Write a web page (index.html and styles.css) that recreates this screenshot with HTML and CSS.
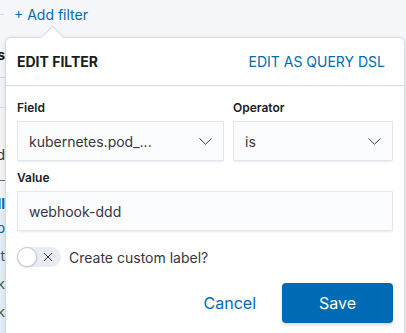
FILE: index.html
```html
<!DOCTYPE html>
<html lang="en">
<head>
  <meta charset="UTF-8" />
  <meta name="viewport" content="width=device-width, initial-scale=1.0"/>
  <title>Edit filter</title>
  <link rel="stylesheet" href="styles.css">
</head>
<body>
  <div class="topbar">
    <span class="topbar-rule"></span>
    <a class="add-filter">+ Add filter</a>
  </div>

  <div class="sidebar">
    <div class="side-title">Fields</div>
    <div class="side-line"></div>
    <div class="side-text">Selected</div>
    <div class="side-dark"></div>
    <div class="side-link">All</div>
    <div class="side-list">
      <div class="side-item blue">timestamp</div>
      <div class="side-item">kubernetes.host</div>
      <div class="side-item">kubernetes.link</div>
      <div class="side-item">kubernetes.pak</div>
    </div>
  </div>

  <div class="popover">
    <div class="popover-arrow"></div>
    <div class="popover-header">
      <span class="popover-title">EDIT FILTER</span>
      <a class="dsl-link">EDIT AS QUERY DSL</a>
    </div>
    <div class="popover-body">
      <div class="form-row">
        <div class="form-field field-name">
          <label class="form-label">Field</label>
          <div class="select">
            <span>kubernetes.pod_...</span>
            <svg class="chevron" width="13" height="7" viewBox="0 0 13 7"><path d="M0.5 0.5 L6.5 6.2 L12.5 0.5" fill="none" stroke="#343741" stroke-width="1"/></svg>
          </div>
        </div>
        <div class="form-field field-op">
          <label class="form-label">Operator</label>
          <div class="select">
            <span>is</span>
            <svg class="chevron" width="13" height="7" viewBox="0 0 13 7"><path d="M0.5 0.5 L6.5 6.2 L12.5 0.5" fill="none" stroke="#343741" stroke-width="1"/></svg>
          </div>
        </div>
      </div>
      <div class="form-field">
        <label class="form-label">Value</label>
        <div class="input">webhook-ddd</div>
      </div>
      <div class="switch-row">
        <span class="switch">
          <span class="switch-knob"></span>
          <svg class="switch-x" width="10" height="10" viewBox="0 0 10 10"><path d="M1 1 L9 9 M9 1 L1 9" stroke="#343741" stroke-width="1"/></svg>
        </span>
        <span class="switch-label">Create custom label?</span>
      </div>
      <div class="actions">
        <button class="btn-empty">Cancel</button>
        <button class="btn-primary">Save</button>
      </div>
    </div>
  </div>
</body>
</html>
```

FILE: styles.css
```css
body {
  margin: 0;
  font-family: Inter, "Noto Sans", sans-serif;
  color: #343741;
  background: #f5f7fa;
  overflow: hidden;
  position: relative;
  height: 333px;
}

.topbar {
  height: 28px;
  display: flex;
  align-items: center;
}

.topbar-rule {
  width: 4px;
  height: 1px;
  background: #d3dae6;
  margin-right: 10px;
}

.add-filter {
  font-size: 14px;
  color: #006bb4;
}

.sidebar {
  width: 120px;
  margin-left: -115px;
  text-align: right;
  font-size: 14px;
}

.side-title {
  height: 49px;
  line-height: 54px;
  font-weight: 700;
  color: #1a1c21;
  border-bottom: 1px solid #d3dae6;
}

.side-line {
  height: 29px;
  border-bottom: 1px solid #d3dae6;
}

.side-text {
  height: 32px;
  padding-top: 38px;
  line-height: 18px;
  color: #343741;
}

.side-dark {
  height: 1px;
  background: #69707d;
  margin-top: 2px;
}

.side-link {
  margin-top: 16px;
  line-height: 14px;
  font-weight: 700;
  color: #006bb4;
}

.side-list {
  background: #e6f0f8;
  padding-top: 3px;
  height: 200px;
}

.side-item {
  height: 28px;
  line-height: 28px;
  color: #3f5f4a;
}

.side-item.blue {
  color: #006bb4;
}

.popover {
  position: absolute;
  top: 37px;
  left: 5px;
  width: 398px;
  height: 320px;
  background: #fff;
  border: 1px solid #d3dae6;
  border-radius: 6px;
  box-shadow: 0 1px 6px rgba(0, 0, 0, 0.06), 0 4px 12px rgba(0, 0, 0, 0.05);
}

.popover-arrow {
  position: absolute;
  top: -9px;
  left: 38px;
  width: 16px;
  height: 16px;
  background: #fff;
  border-left: 1px solid #d3dae6;
  border-top: 1px solid #d3dae6;
  transform: rotate(45deg);
}

.popover-header {
  position: relative;
  height: 47px;
  display: flex;
  align-items: center;
  justify-content: space-between;
  padding: 0 19px 0 11px;
  border-bottom: 1px solid #d3dae6;
  font-size: 14px;
}

.popover-title {
  font-weight: 700;
  color: #1a1c21;
}

.dsl-link {
  color: #006bb4;
}

.popover-body {
  padding: 13px 11px;
}

.form-row {
  display: flex;
  gap: 9px;
  margin-bottom: 8px;
}

.field-name {
  flex: 0 0 207px;
}

.field-op {
  flex: 1;
}

.form-label {
  display: block;
  font-size: 12px;
  font-weight: 600;
  line-height: 18px;
  margin-bottom: 4px;
  color: #1a1c21;
}

.select, .input {
  height: 40px;
  box-sizing: border-box;
  display: flex;
  align-items: center;
  justify-content: space-between;
  padding: 0 12px;
  background: #fbfcfd;
  box-shadow: 0 1px 1px -1px rgba(152, 162, 179, 0.2), 0 3px 2px -2px rgba(152, 162, 179, 0.2), inset 0 0 0 1px rgba(15, 39, 118, 0.1);
  font-size: 14px;
  color: #343741;
}

.switch-row {
  display: flex;
  align-items: center;
  margin-top: 16px;
  height: 20px;
}

.switch {
  position: relative;
  width: 44px;
  height: 20px;
  border-radius: 10px;
  background: #e9edf3;
  margin-right: 8px;
}

.switch-knob {
  position: absolute;
  left: 0;
  top: 0;
  width: 18px;
  height: 18px;
  border-radius: 50%;
  background: #fff;
  border: 1px solid #c2c9d4;
  box-shadow: 0 1px 2px rgba(0, 0, 0, 0.12);
}

.switch-x {
  position: absolute;
  left: 26px;
  top: 5px;
}

.switch-label {
  font-size: 14px;
}

.actions {
  display: flex;
  justify-content: flex-end;
  align-items: center;
  gap: 12px;
  margin-top: 16px;
}

button {
  font-family: inherit;
  font-size: 16px;
  height: 40px;
  border: none;
  border-radius: 4px;
  cursor: pointer;
}

.btn-empty {
  background: none;
  color: #006bb4;
  padding: 0 14px;
}

.btn-primary {
  width: 111px;
  background: #006bb4;
  color: #fff;
  font-weight: 400;
  box-shadow: 0 2px 3px rgba(0, 0, 0, 0.15);
}
```
